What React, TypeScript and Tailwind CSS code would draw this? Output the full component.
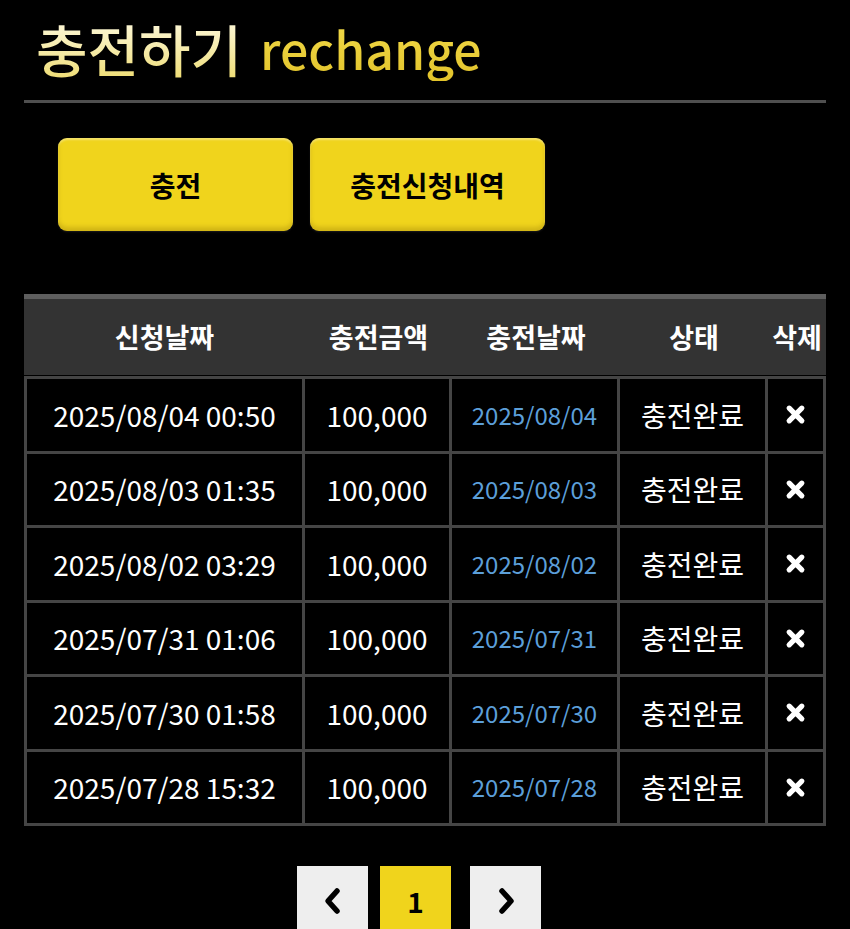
import React from "react";

const rows = [
  ["2025/08/04 00:50", "100,000", "2025/08/04", "충전완료"],
  ["2025/08/03 01:35", "100,000", "2025/08/03", "충전완료"],
  ["2025/08/02 03:29", "100,000", "2025/08/02", "충전완료"],
  ["2025/07/31 01:06", "100,000", "2025/07/31", "충전완료"],
  ["2025/07/30 01:58", "100,000", "2025/07/30", "충전완료"],
  ["2025/07/28 15:32", "100,000", "2025/07/28", "충전완료"],
];

const XIcon = () => (
  <svg width="21" height="21" viewBox="0 0 20 20">
    <path d="M4 4 L16 16 M16 4 L4 16" stroke="#fff" strokeWidth="5" strokeLinecap="round" />
  </svg>
);

const btn =
  "w-[235px] h-[93px] rounded-[9px] bg-[#f0d41c] text-black text-[28px] font-bold shadow-[inset_0_-4px_4px_rgba(120,90,0,0.25),inset_0_2px_2px_rgba(255,255,255,0.35),0_1px_2px_rgba(255,255,255,0.1)]";

export default function App() {
  return (
    <div
      className="min-h-[929px] w-[850px] bg-black overflow-hidden"
      style={{ fontFamily: '"Noto Sans CJK KR", "Noto Sans", sans-serif' }}
    >
      <div className="px-[24px]">
        <h1 className="pl-[12px] h-[100px] pb-[4px] flex items-center font-medium">
          <span className="text-[56px] leading-[1.3] bg-gradient-to-b from-[#fffbe6] to-[#eedb6a] bg-clip-text text-transparent">
            충전하기
          </span>
          <span className="ml-[18px] text-[50px] leading-[1.3] bg-gradient-to-b from-[#f3dc4a] to-[#e2c32a] bg-clip-text text-transparent">
            rechange
          </span>
        </h1>
        <div className="h-[3px] bg-[#4f4f4f]" />

        <div className="flex gap-[17px] pl-[34px] mt-[35px]">
          <button className={btn}>충전</button>
          <button className={btn}>충전신청내역</button>
        </div>

        <div className="mt-[63px] w-[802px]">
          <div className="h-[5px] bg-[#5e5e5e]" />
          <div className="grid grid-cols-[281px_147px_168px_148px_58px] h-[76px] bg-[#333333] text-white text-[27px] font-bold items-center">
            <div className="text-center">신청날짜</div>
            <div className="text-center">충전금액</div>
            <div className="text-center">충전날짜</div>
            <div className="text-center">상태</div>
            <div className="text-center whitespace-nowrap">삭제</div>
          </div>
          <div className="bg-[#454545] p-[3px] flex flex-col gap-[3px] border-t-[1px] border-black">
            {rows.map((r, i) => (
              <div key={i} className="grid grid-cols-[275px_144px_165px_145px_55px] gap-[3px] h-[71.5px]">
                <div className="bg-black flex items-center justify-center text-white text-[28px]">{r[0]}</div>
                <div className="bg-black flex items-center justify-center text-white text-[28px]">{r[1]}</div>
                <div className="bg-black flex items-center justify-center text-[#5c9fd9] text-[24px]">{r[2]}</div>
                <div className="bg-black flex items-center justify-center text-white text-[28px]">{r[3]}</div>
                <div className="bg-black flex items-center justify-center">
                  <XIcon />
                </div>
              </div>
            ))}
          </div>
        </div>

        <div className="flex mt-[40px] pl-[273px]">
          <div className="w-[71px] h-[70px] bg-[#eeeeee] flex items-center justify-center">
            <svg width="26" height="30" viewBox="0 0 26 30">
              <path d="M17 5 L8 15 L17 25" stroke="#000" strokeWidth="5.5" fill="none" strokeLinecap="round" strokeLinejoin="round" />
            </svg>
          </div>
          <div className="ml-[12px] w-[71px] h-[70px] bg-[#f0d41c] flex items-center justify-center text-black text-[28px] font-bold">
            1
          </div>
          <div className="ml-[19px] w-[71px] h-[70px] bg-[#eeeeee] flex items-center justify-center">
            <svg width="26" height="30" viewBox="0 0 26 30">
              <path d="M9 5 L18 15 L9 25" stroke="#000" strokeWidth="5.5" fill="none" strokeLinecap="round" strokeLinejoin="round" />
            </svg>
          </div>
        </div>
      </div>
    </div>
  );
}
